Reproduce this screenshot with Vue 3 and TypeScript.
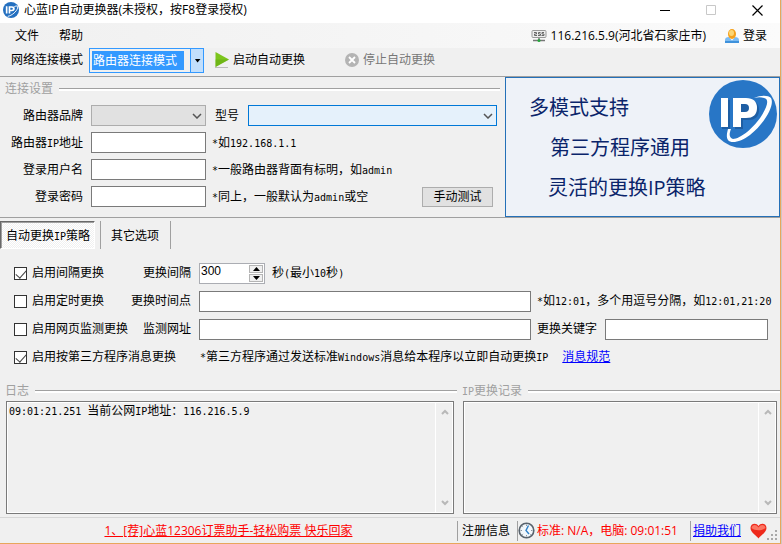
<script setup lang="ts">
import { h, ref } from 'vue'

// Splits a label so that Latin runs are set in the half-width monospaced face.
const T = (props: { s: string }) =>
  h(
    'span',
    { class: 'mix' },
    props.s
      .split(/([\x20-\x7e]+)/)
      .filter((part) => part.length > 0)
      .map((part) => h('span', { class: /^[\x20-\x7e]/.test(part) ? 'latin' : 'han' }, part)),
  )
T.props = ['s']

const mode = ref('路由器连接模式')
const brand = ref('')
const model = ref('')
const address = ref('')
const user = ref('')
const password = ref('')
const byInterval = ref(true)
const byTime = ref(false)
const byPage = ref(false)
const byMessage = ref(true)
const interval = ref(300)
const times = ref('')
const watchUrl = ref('')
const keyword = ref('')
const logLines = ['09:01:21.251 当前公网IP地址：116.216.5.9']

function step(delta: number) {
  interval.value = Math.max(10, interval.value + delta)
}
</script>

<template>
  <div class="window">
    <header class="titlebar">
      <svg class="app-icon" viewBox="0 0 68 68" aria-hidden="true">
        <circle cx="34" cy="34" r="34" fill="#2470c0" />
        <path d="M12 18h7v31h-7zM24 18h14q12 0 12 10.500t-12 10.500h-7v10h-7zM31 24v9h6q5 0 5-4.500t-5-4.500z" fill="#fff" />
        <path d="M48 20C58 14 65 16 62 26 58 40 38 58 20 61" fill="none" stroke="#fff" stroke-width="4" />
      </svg>
      <h1>心蓝IP自动更换器(未授权，按F8登录授权)</h1>
      <button class="caption" aria-label="最小化">
        <svg width="11" height="11"><path d="M0 5.500h10" stroke="#000" /></svg>
      </button>
      <button class="caption" aria-label="最大化" disabled>
        <svg width="11" height="11"><path d="M.5.5h9v9h-9z" fill="none" stroke="#c8c8c8" /></svg>
      </button>
      <button class="caption" aria-label="关闭">
        <svg width="11" height="11"><path d="M.5.5l10 10M10.500.5l-10 10" stroke="#000" stroke-width="1.200" /></svg>
      </button>
    </header>

    <nav class="menubar">
      <button class="menu">文件</button>
      <button class="menu">帮助</button>
      <span class="public-ip">
        <svg width="16" height="16" viewBox="0 0 16 16" aria-hidden="true">
          <rect x="1" y="2.500" width="14" height="7" rx="1" fill="#eee" stroke="#999" />
          <path d="M3 4.500h2.500v1.500H3.500v1.500H6M9.500 4.500H7.500v1.500h2v1.500h-2.500M13 4.500h-2v1.500h2v1.500h-2.500" fill="none" stroke="#666" />
          <path d="M2 12.500h12M8 10v2" stroke="#777" stroke-width="1.500" />
          <circle cx="8" cy="12.500" r="1.500" fill="#25a83c" />
        </svg>
        116.216.5.9(河北省石家庄市)
      </span>
      <button class="menu login">
        <svg width="16" height="16" viewBox="0 0 16 16" aria-hidden="true">
          <path d="M1 14.500v-2.500q0-3 4-3h5.500q4.500 0 4.500 3v2.500z" fill="#7dbcf2" />
          <path d="M1 13h14v2H1z" fill="#3f92dc" />
          <path d="M5 9l3 3.500L11 9z" fill="#fff" />
          <ellipse cx="8" cy="6" rx="4" ry="5" fill="#f5a11c" />
          <ellipse cx="7.500" cy="5" rx="2.500" ry="3" fill="#fdd673" />
        </svg>
        登录
      </button>
    </nav>

    <div class="toolbar">
      <label for="mode">网络连接模式</label>
      <div class="combo">
        <select id="mode" v-model="mode">
          <option>路由器连接模式</option>
        </select>
        <span class="drop"><svg width="7" height="4"><path d="M1 0h5.500L3.500 3.500z" /></svg></span>
      </div>
      <button class="tool start">
        <svg width="16" height="18" viewBox="0 0 16 18" aria-hidden="true">
          <path d="M1 16.500h13" stroke="#bbb" />
          <path d="M1.500 1L15 8.500 1.500 16z" fill="#7cc51c" />
          <path d="M1.500 8.500H15L1.500 16z" fill="#62a80f" opacity=".5" />
        </svg>
        启动自动更换
      </button>
      <button class="tool stop" disabled>
        <svg width="16" height="16" viewBox="0 0 16 16" aria-hidden="true">
          <circle cx="8" cy="8" r="7" fill="#b4b4b4" />
          <path d="M5 5l6 6M11 5l-6 6" stroke="#fff" stroke-width="1.800" />
        </svg>
        停止自动更换
      </button>
    </div>

    <section class="connection">
      <form class="settings" @submit.prevent>
        <h2 class="group"><T s="连接设置" /></h2>
        <div class="row">
          <label class="name" for="brand"><T s="路由器品牌" /></label>
          <div class="picker short">
            <select id="brand" v-model="brand" disabled></select>
            <svg class="chevron" width="10" height="6"><path d="M1 1l4 4 4-4" /></svg>
          </div>
          <label class="model-name" for="model"><T s="型号" /></label>
          <div class="picker wide">
            <select id="model" v-model="model"></select>
            <svg class="chevron" width="10" height="6"><path d="M1 1l4 4 4-4" /></svg>
          </div>
        </div>
        <div class="row">
          <label class="name" for="address"><T s="路由器IP地址" /></label>
          <input id="address" v-model="address" class="short" type="text" />
          <T s="*如192.168.1.1" />
        </div>
        <div class="row">
          <label class="name" for="user"><T s="登录用户名" /></label>
          <input id="user" v-model="user" class="short" type="text" />
          <T s="*一般路由器背面有标明，如admin" />
        </div>
        <div class="row">
          <label class="name" for="password"><T s="登录密码" /></label>
          <input id="password" v-model="password" class="short" type="password" />
          <T s="*同上，一般默认为admin或空" />
          <button class="test"><T s="手动测试" /></button>
        </div>
      </form>
      <aside class="banner">
        <p>多模式支持</p>
        <p>第三方程序通用</p>
        <p>灵活的更换IP策略</p>
        <svg class="logo" viewBox="0 0 68 68" aria-hidden="true">
          <circle cx="34" cy="34" r="34" fill="#2876c6" />
          <g fill="#174f8c" opacity=".6" transform="translate(1 1)">
            <path d="M12 19h8v29h-8zM25 19h13q11 0 11 10t-11 10h-5v9h-8z" />
          </g>
          <path d="M12 18h7v29h-7z" fill="#fff" />
          <path fill-rule="evenodd" d="M24 18h13q11 0 11 10t-11 10h-5v9h-8zM32 24v8h4q4 0 4-4t-4-4z" fill="#fff" />
          <path d="M45 18C52 15 59 15 62 18 66 25 56 43 41 55 32 62 22 64 19 60 17 57 18 53 19 49H22C20 54 20 58 24 59 31 59 45 48 53 35 59 25 60 19 55 18 52 17 49 17 45 18z" fill="#fff" />
        </svg>
      </aside>
    </section>

    <div class="tabs" role="tablist">
      <button class="tab active" role="tab" aria-selected="true"><T s="自动更换IP策略" /></button>
      <button class="tab" role="tab" aria-selected="false"><T s="其它选项" /></button>
    </div>

    <section class="options">
      <div class="option">
        <label class="check"><input v-model="byInterval" type="checkbox" /><T s="启用间隔更换" /></label>
        <label class="field" for="interval"><T s="更换间隔" /></label>
        <div class="spinner">
          <input id="interval" v-model.number="interval" type="text" />
          <div class="steps">
            <button aria-label="增加" @click="step(1)"><svg width="7" height="4"><path d="M3.500 0L7 4H0z" /></svg></button>
            <button aria-label="减少" @click="step(-1)"><svg width="7" height="4"><path d="M0 0h7L3.500 4z" /></svg></button>
          </div>
        </div>
        <T s="秒(最小10秒)" />
      </div>
      <div class="option">
        <label class="check"><input v-model="byTime" type="checkbox" /><T s="启用定时更换" /></label>
        <label class="field" for="times"><T s="更换时间点" /></label>
        <input id="times" v-model="times" class="grow" type="text" />
        <T class="side" s="*如12:01，多个用逗号分隔，如12:01,21:20" />
      </div>
      <div class="option">
        <label class="check"><input v-model="byPage" type="checkbox" /><T s="启用网页监测更换" /></label>
        <label class="field" for="url"><T s="监测网址" /></label>
        <input id="url" v-model="watchUrl" class="grow" type="text" />
        <div class="side keyword">
          <label for="keyword"><T s="更换关键字" /></label>
          <input id="keyword" v-model="keyword" type="text" />
        </div>
      </div>
      <div class="option">
        <label class="check message"><input v-model="byMessage" type="checkbox" /><T s="启用按第三方程序消息更换" /></label>
        <T s="*第三方程序通过发送标准Windows消息给本程序以立即自动更换IP" />
        <a class="spec" href="#"><T s="消息规范" /></a>
      </div>
    </section>

    <section class="logs">
      <div class="log-pane">
        <h2 class="group"><T s="日志" /></h2>
        <div class="box">
          <div class="lines" role="log" tabindex="0">
            <div v-for="line in logLines" :key="line"><T :s="line" /></div>
          </div>
          <div class="scroll">
            <svg width="8" height="6"><path d="M1 5l3-3 3 3" /></svg>
            <svg width="8" height="6"><path d="M1 1l3 3 3-3" /></svg>
          </div>
        </div>
      </div>
      <div class="record-pane">
        <h2 class="group"><T s="IP更换记录" /></h2>
        <div class="box">
          <div class="lines" role="log" tabindex="0"></div>
          <div class="scroll">
            <svg width="8" height="6"><path d="M1 5l3-3 3 3" /></svg>
            <svg width="8" height="6"><path d="M1 1l3 3 3-3" /></svg>
          </div>
        </div>
      </div>
    </section>

    <footer class="status">
      <div class="promo"><a href="#">1、[荐]心蓝12306订票助手-轻松购票 快乐回家</a></div>
      <button class="cell register">注册信息</button>
      <div class="cell clock">
        <svg width="17" height="17" viewBox="0 0 17 17" aria-hidden="true">
          <circle cx="8.500" cy="8.500" r="7.300" fill="#f2f7fb" stroke="#59636d" stroke-width="1.600" />
          <path d="M8.500 2.500v1.500M8.500 13v1.500M2.500 8.500H4M13 8.500h1.500M4.300 4.300l.8.8M4.300 12.700l.8-.8M12.700 12.700l-.8-.8" stroke="#8b959e" />
          <path d="M10.500 3.500L8 8.500l3 3.500" fill="none" stroke="#2f80c8" stroke-width="1.400" />
        </svg>
        <span>标准: N/A，电脑: 09:01:51</span>
      </div>
      <div class="cell donate">
        <a href="#">捐助我们</a>
        <svg width="17" height="16" viewBox="0 0 17 16" aria-hidden="true">
          <path d="M8.500 15.500C7 13 .5 9.500.5 5 .5 0 6.500-.5 8.500 3 10.500-.5 16.500 0 16.500 5c0 4.500-6.500 8-8 10.500z" fill="#ee2a1c" />
          <path d="M1.500 5C2 1.500 6 .5 8.500 4.500 11 .5 15 1.500 15.500 5 12 8 5 8 1.500 5z" fill="#ff8a76" opacity=".8" />
        </svg>
      </div>
      <svg class="grip" width="11" height="11" aria-hidden="true">
        <path d="M8 0h2v2H8zM4 4h2v2H4zM8 4h2v2H8zM0 8h2v2H0zM4 8h2v2H4zM8 8h2v2H8z" fill="#a8a8a8" />
      </svg>
    </footer>
  </div>
</template>

<style>
body {
  background: #cfc8c2;
}
.mix {
  white-space: pre;
}
.mix .latin {
  font: 10px/12px "DejaVu Sans Mono", monospace;
}
</style>

<style scoped>
* {
  box-sizing: border-box;
}
.window {
  display: flex;
  flex-direction: column;
  min-height: 100vh;
  margin-right: 1px;
  border-right: 1px solid #e8a65c;
  border-bottom: 1px solid #e8a65c;
  background: #f0f0f0;
  color: #000;
  font: 12px/16px "Open Sans", "Noto Sans CJK SC", sans-serif;
  white-space: nowrap;
}
h1,
h2,
p {
  margin: 0;
  font-size: inherit;
  font-weight: normal;
}
button,
input,
select {
  margin: 0;
  padding: 0;
  border: 0;
  border-radius: 0;
  background: none;
  color: inherit;
  font: inherit;
}
svg {
  display: block;
  flex: none;
}
a {
  color: #00f;
}

.titlebar {
  display: flex;
  align-items: center;
  height: 23px;
  padding: 0 0 3px 3px;
  background: #fff;
}
.app-icon {
  width: 16px;
  height: 16px;
  margin-right: 5px;
}
.titlebar h1 {
  flex: 1;
}
.caption {
  display: flex;
  align-items: center;
  justify-content: center;
  width: 46px;
  height: 20px;
}

.menubar {
  display: flex;
  align-items: center;
  height: 25px;
  padding: 0 13px 0 15px;
  background: linear-gradient(90deg, #f0f0f0, #fbfbfb);
}
.menu {
  margin-right: 20px;
}
.public-ip {
  display: flex;
  align-items: center;
  gap: 4px;
  margin-left: auto;
}
.login {
  display: flex;
  align-items: center;
  gap: 3px;
  margin: 0 0 0 18px;
}

.toolbar {
  display: flex;
  align-items: flex-start;
  height: 29px;
  padding-left: 11px;
  border-bottom: 1px solid #a0a0a0;
  line-height: 24px;
}
.combo {
  display: flex;
  width: 115px;
  height: 25px;
  margin-left: 6px;
  border: 1px solid #3399ff;
}
.combo select {
  flex: 1;
  min-width: 0;
  padding: 0 3px;
  appearance: none;
  background: linear-gradient(#3399ff, #3399ff) 2px 2px / 92px 19px no-repeat;
  color: #fff;
}
.drop {
  display: flex;
  align-items: center;
  justify-content: center;
  width: 13px;
  border-left: 1px solid #3399ff;
  background: #c2dffc;
}
.tool {
  display: flex;
  align-items: center;
  gap: 3px;
  height: 24px;
}
.start {
  margin-left: 10px;
}
.stop {
  margin-left: 39px;
  color: #777;
}

.connection {
  display: flex;
  border-bottom: 1px solid #a0a0a0;
}
.settings {
  flex: 1;
  min-width: 0;
}
.group {
  display: flex;
  align-items: center;
  gap: 6px;
  height: 24px;
  padding-left: 5px;
  color: #a0a0a0;
}
.group::after {
  content: "";
  flex: 1;
  height: 2px;
  border-top: 1px solid #a0a0a0;
  background: #fff;
}
.settings .group {
  margin: 0 5px 1px 0;
}
.row {
  display: flex;
  align-items: center;
  gap: 6px;
  height: 27px;
  padding-right: 8px;
}
.name {
  width: 83px;
  margin-right: 2px;
  text-align: right;
}
input[type="text"],
input[type="password"] {
  height: 21px;
  min-width: 0;
  padding: 0 3px;
  border: 1px solid #7a7a7a;
  background: #fff;
}
.short {
  width: 115px;
}
.picker {
  position: relative;
  height: 21px;
}
.picker select {
  display: block;
  width: 100%;
  height: 100%;
  border: 1px solid #0078d7;
  appearance: none;
  background: #e5f1fb;
}
.picker select:disabled {
  border-color: #adadad;
  background: #e1e1e1;
  opacity: 1;
}
.chevron {
  position: absolute;
  top: 8px;
  right: 4px;
  fill: none;
  stroke: #555;
  stroke-width: 1.5;
  pointer-events: none;
}
.model-name {
  margin: 0 3px;
}
.wide {
  flex: 1;
}
.test {
  width: 71px;
  height: 20px;
  margin: 0 4px 0 auto;
  border: 1px solid #adadad;
  background: #e1e1e1;
}
.banner {
  position: relative;
  width: 275px;
  height: 140px;
  padding: 10px 0 0 23px;
  border: 1px solid #2470b8;
  background: #eef2f8;
  color: #0a246a;
  font-size: 20px;
  line-height: 40px;
}
.banner p:nth-child(2) {
  padding-left: 21px;
}
.banner p:nth-child(3) {
  padding-left: 19px;
}
.logo {
  position: absolute;
  top: 2px;
  right: 2px;
  width: 68px;
  height: 68px;
}

.tabs {
  display: flex;
  gap: 5px;
  padding-top: 3px;
}
.tab {
  height: 28px;
  padding: 1px 11px 0 10px;
  border: solid #a0a0a0;
  border-width: 0 1px;
}
.tab.active {
  padding: 2px 4px 0 5px;
  border: 1px solid;
  border-color: #696969 #fff #fff #696969;
  background: repeating-conic-gradient(#fff 0 25%, #f0f0f0 0 50%) 0 0 / 2px 2px;
  box-shadow: inset 1px 1px #a0a0a0;
}

.options {
  display: flex;
  flex-direction: column;
  padding: 10px 12px 10px 14px;
}
.option {
  display: flex;
  align-items: center;
  height: 28px;
}
.check {
  display: flex;
  align-items: center;
  gap: 5px;
}
.check input {
  position: relative;
  width: 13px;
  height: 13px;
  border: 1px solid #333;
  appearance: none;
  background: #fff;
}
.check input:checked::after {
  content: "";
  position: absolute;
  top: 0;
  left: 3px;
  width: 5px;
  height: 9px;
  border: solid #444;
  border-width: 0 1px 1px 0;
  transform: rotate(42deg);
}
.message {
  margin-right: 24px;
}
.field {
  flex: none;
  margin: 0 8px 0 auto;
  text-align: right;
}
.option > .check:not(.message) {
  width: 117px;
}
.option > .field {
  width: 60px;
  margin-left: 0;
}
.spinner {
  display: flex;
  width: 66px;
  height: 21px;
  margin-right: 7px;
  border: 1px solid #abadb3;
  background: #fff;
}
.spinner input[type="text"] {
  flex: 1;
  height: 15px;
  padding: 0 1px;
  border: 0;
  font-family: "Liberation Sans", sans-serif;
}
.steps {
  display: flex;
  flex-direction: column;
  gap: 1px;
  width: 15px;
  padding: 1px 1px 1px 0;
}
.steps button {
  display: flex;
  flex: 1;
  align-items: center;
  justify-content: center;
  border: 1px solid #b4b4b4;
  background: #f0f0f0;
}
.grow {
  flex: 1;
}
.side {
  width: 231px;
  margin-left: 6px;
}
.keyword {
  display: flex;
  align-items: center;
  gap: 8px;
}
.keyword input {
  flex: 1;
}
.spec {
  margin-left: 14px;
}

.logs {
  display: flex;
  flex: 1;
  gap: 5px;
  padding-bottom: 3px;
}
.log-pane,
.record-pane {
  display: flex;
  flex-direction: column;
}
.log-pane {
  flex: 457;
}
.record-pane {
  flex: 318;
}
.logs .group {
  height: 20px;
}
.record-pane .group {
  padding-left: 0;
}
.box {
  display: flex;
  flex: 1;
  min-height: 100px;
  margin: 0 3px 0 6px;
  border: 1px solid #7a7a7a;
  box-shadow: inset 0 0 0 1px #fff;
}
.record-pane .box {
  margin: 0 3px 0 1px;
}
.lines {
  flex: 1;
  padding: 1px 2px;
}
.scroll {
  display: flex;
  flex-direction: column;
  align-items: center;
  justify-content: space-between;
  width: 18px;
  padding: 7px 0;
  border-left: 1px solid #fff;
  fill: none;
  stroke: #b8b8b8;
  stroke-width: 2;
}

.status {
  display: flex;
  align-items: center;
  height: 26px;
  padding-right: 2px;
  border-top: 1px solid #d7d7d7;
}
.promo {
  flex: 1;
  text-align: center;
}
.promo a {
  color: #f00;
}
.cell {
  display: flex;
  align-items: center;
  height: 20px;
  border-left: 1px solid #a0a0a0;
}
.register {
  padding: 0 7px 0 4px;
}
.clock {
  gap: 2px;
  padding-right: 12px;
  color: #f00;
}
.donate {
  gap: 9px;
  padding-left: 2px;
}
.grip {
  align-self: flex-end;
  margin-bottom: 2px;
}
</style>
